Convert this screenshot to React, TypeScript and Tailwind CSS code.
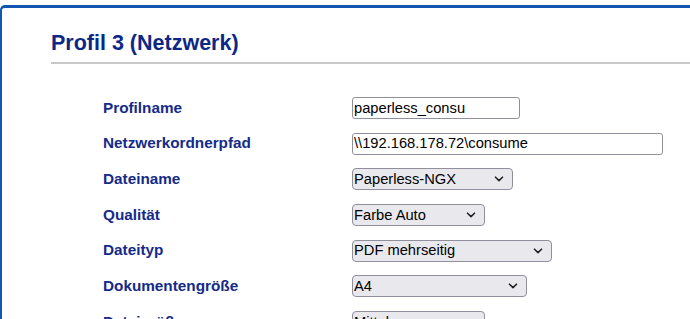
import React from "react";

const Chevron = () => (
  <svg width="10" height="6" viewBox="0 0 10 6" className="shrink-0">
    <path d="M1.5 1.2 L5 4.6 L8.5 1.2" fill="none" stroke="#222" strokeWidth="1.6" strokeLinecap="round" strokeLinejoin="round" />
  </svg>
);

const TextBox = ({ value, w }: { value: string; w: string }) => (
  <div className={`${w} h-[22px] bg-white border border-[#8f8f9d] rounded-[3px] flex items-center pl-[1px] text-[14.7px] text-black leading-none whitespace-nowrap overflow-hidden`}>
    {value}
  </div>
);

const SelectBox = ({ value, w }: { value: string; w: string }) => (
  <div className={`${w} h-[22px] bg-[#e9e9ed] border border-[#8f8f9d] rounded-[4px] flex items-center justify-between pl-[1px] pr-[8px] text-[14.7px] text-black leading-none whitespace-nowrap`}>
    <span>{value}</span>
    <Chevron />
  </div>
);

export default function App() {
  const rows: { label: string; el: React.ReactNode }[] = [
    { label: "Profilname", el: <TextBox value="paperless_consu" w="w-[168px]" /> },
    { label: "Netzwerkordnerpfad", el: <TextBox value={"\\\\192.168.178.72\\consume"} w="w-[311px]" /> },
    { label: "Dateiname", el: <SelectBox value="Paperless-NGX" w="w-[161px]" /> },
    { label: "Qualität", el: <SelectBox value="Farbe Auto" w="w-[133px]" /> },
    { label: "Dateityp", el: <SelectBox value="PDF mehrseitig" w="w-[200px]" /> },
    { label: "Dokumentengröße", el: <SelectBox value="A4" w="w-[175px]" /> },
    { label: "Dateigröße", el: <SelectBox value="Mittel" w="w-[133px]" /> },
  ];
  return (
    <div className="w-[690px] h-[319px] overflow-hidden bg-white" style={{ fontFamily: '"Liberation Sans", Arial, sans-serif' }}>
      <div className="mt-[5px] border-t-[3px] border-l-[2px] border-[#1256b0] rounded-tl-[5px] h-[400px]">
        <div className="pl-[49px] pt-[23px]">
          <h1 className="text-[21.5px] font-bold text-[#0c2886] leading-[25px] pb-[6px] border-b-[2px] border-[#c8c8c8]">
            Profil 3 (Netzwerk)
          </h1>
          <div className="pl-[52px] pt-[33px] grid grid-cols-[249px_1fr] gap-y-[13.7px]">
            {rows.map((r) => (
              <React.Fragment key={r.label}>
                <div className="h-[22px] flex items-center text-[15.3px] font-bold text-[#152b89]">{r.label}</div>
                <div>{r.el}</div>
              </React.Fragment>
            ))}
          </div>
        </div>
      </div>
    </div>
  );
}
